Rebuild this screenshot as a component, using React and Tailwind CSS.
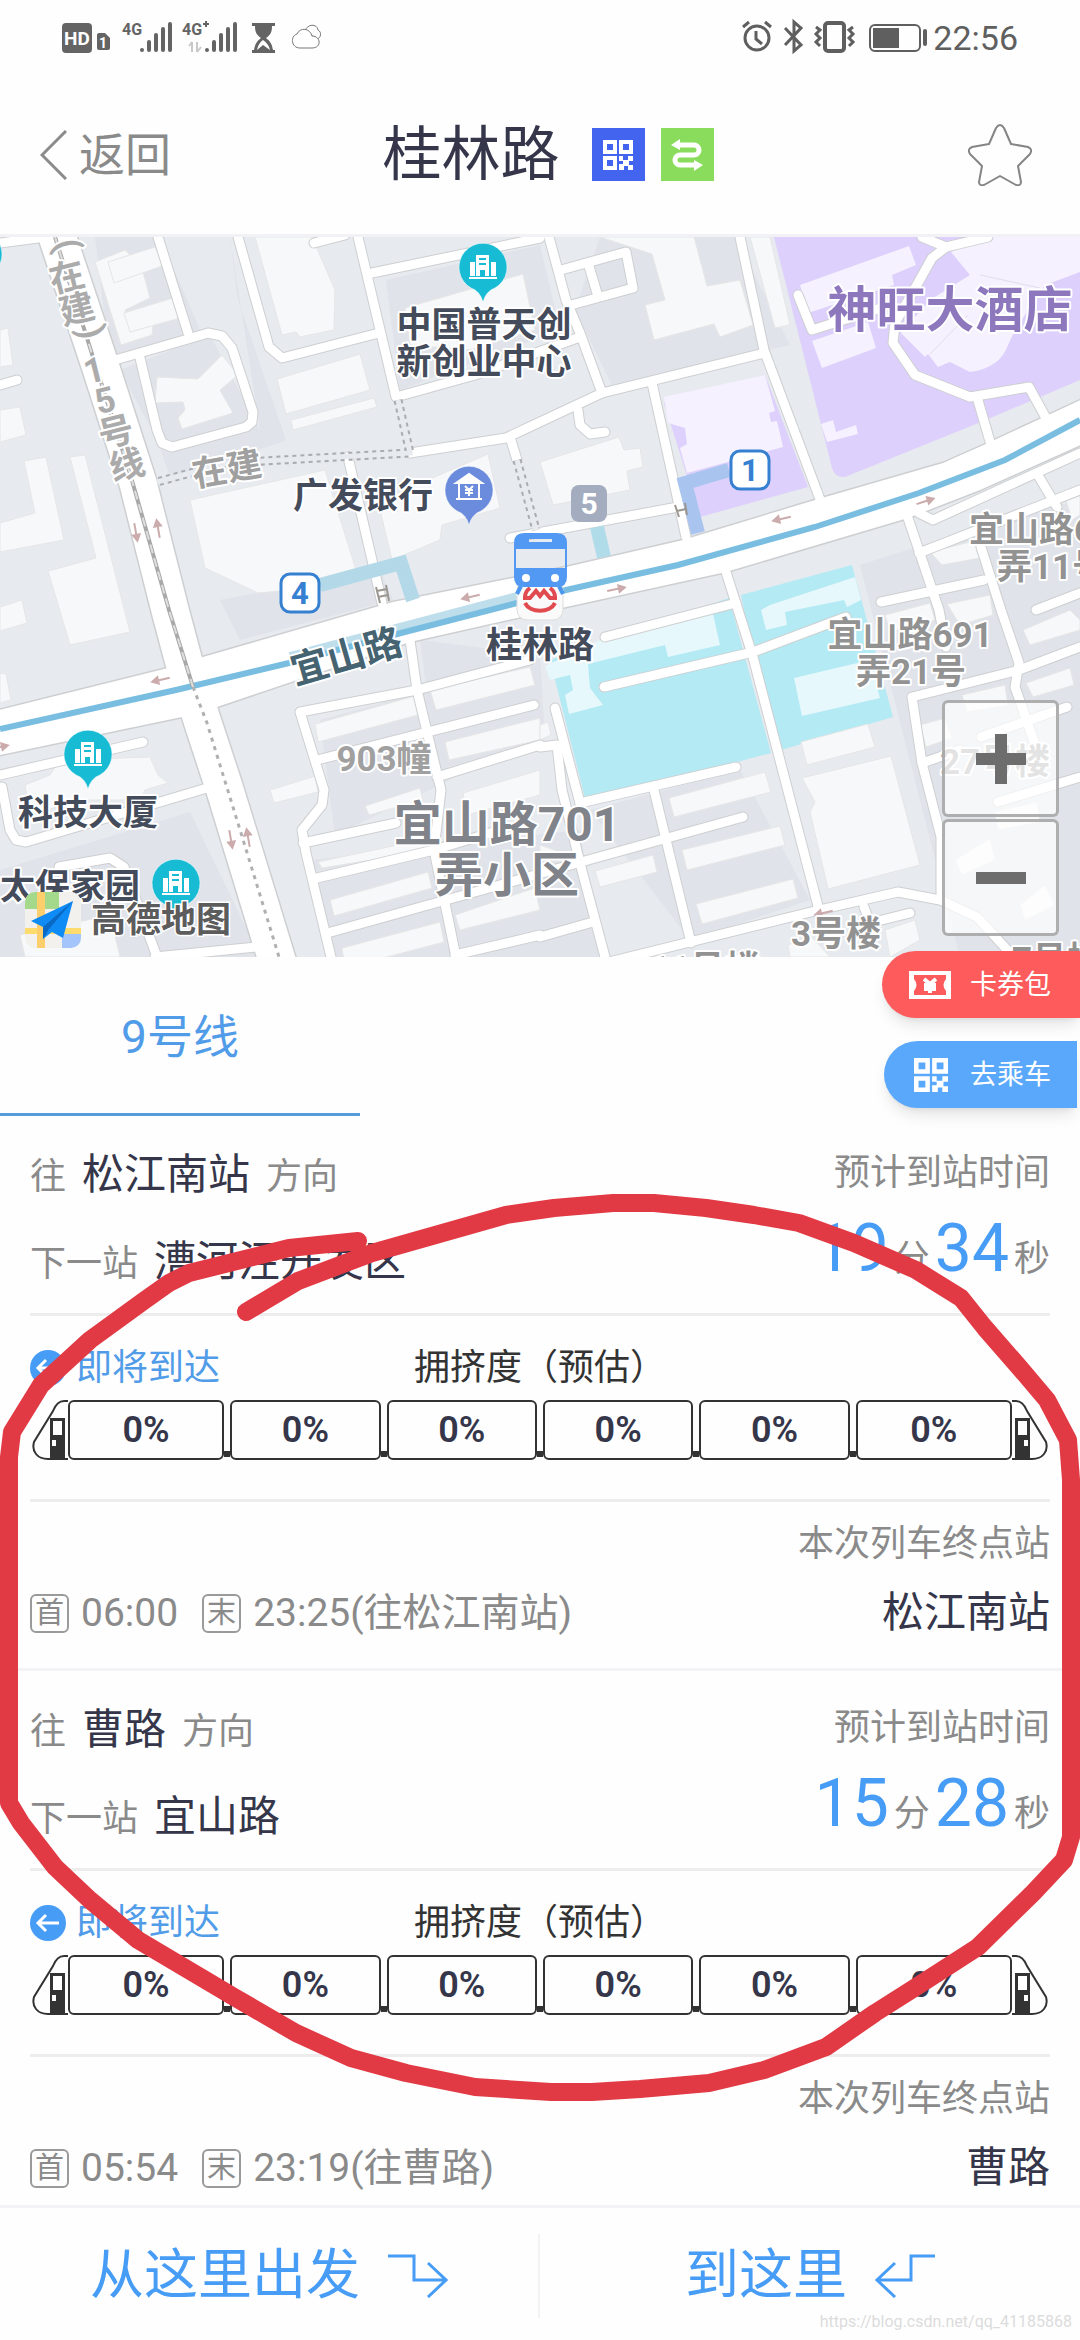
import React from 'react';

const directions = [
  {
    to: '松江南站',
    next: '漕河泾开发区',
    minutes: '19',
    seconds: '34',
    first: '06:00',
    last: '23:25(往松江南站)',
    cars: ['0%', '0%', '0%', '0%', '0%', '0%'],
  },
  {
    to: '曹路',
    next: '宜山路',
    minutes: '15',
    seconds: '28',
    first: '05:54',
    last: '23:19(往曹路)',
    cars: ['0%', '0%', '0%', '0%', '0%', '0%'],
  },
];

const StatusBar = () => (
  <div className="flex h-[75px] items-center justify-between pl-[60px] pr-[62px] text-[#5f5f5f]">
    <svg viewBox="60 18 264 40" className="h-10 w-[264px]" fill="#646464">
      <rect x="62" y="23" width="30" height="30" rx="4" />
      <text x="77" y="45" fontSize="19" fontWeight="700" fill="#fff" textAnchor="middle">HD</text>
      <path d="M97 35q0-2 2-2h6l5 5v10q0 2-2 2h-9q-2 0-2-2z" />
      <text x="103" y="48" fontSize="14" fontWeight="700" fill="#fff" textAnchor="middle">1</text>
      <text x="122" y="35" fontSize="16" fontWeight="700">4G</text>
      <text x="182" y="35" fontSize="16" fontWeight="700">4G</text>
      <path d="M203 24h6M206 21v6" stroke="#646464" strokeWidth="2" />
      <g stroke="#646464" strokeWidth="4" strokeLinecap="round">
        <path d="M142 50v0M149 42v8M156 35v15M163 29v21M170 24v26" />
        <path d="M207 50v0M214 42v8M221 35v15M228 29v21M235 24v26" />
      </g>
      <path d="M192 42v10M189 46l3-4M197 42v10M197 52l4-5" stroke="#c8c8c8" strokeWidth="2" fill="none" />
      <path d="M252 23h23v3h-3c0 7-2 9-6 12c4 3 6 6 7 12h2v3h-23v-3h2c1-6 3-9 7-12c-4-3-6-5-6-12h-3z" />
      <path d="M257 50c1-5 3-8 6-10c3 2 6 5 7 10l-7-5z" fill="#fff" />
      <g fill="#fff" stroke="#777" strokeWidth="1">
        <path d="M305 31c2-7 12-8 13-1c4 2 3 8-1 9z" />
        <path d="M300 48c-9 0-10-12-3-14c3-7 13-6 15 2c9 0 10 12 0 12z" />
      </g>
    </svg>
    <div className="flex items-center gap-1">
      <svg viewBox="738 18 189 40" className="h-10 w-[189px]" fill="none" stroke="#5f5f5f" strokeWidth="3">
        <circle cx="755" cy="38" r="12" />
        <path d="M754 31v8l6 5M741 27l6-5M763 22l6 5" />
        <path d="M783 28l16 17l-7 6v-29l7 6l-16 17" />
        <rect x="823" y="23" width="19" height="28" rx="3" strokeWidth="4" />
        <path d="M814 27l4 3l-4 4l4 4l-4 4l4 4M851 27l-4 3l4 4l-4 4l4 4l-4 4" />
        <rect x="868" y="25" width="50" height="26" rx="5" strokeWidth="2" />
        <path d="M871 28h26v20h-26z" fill="#5f5f5f" stroke="none" />
        <path d="M923 31v13" strokeWidth="4" strokeLinecap="round" />
      </svg>
      <span className="text-[34px] leading-10">22:56</span>
    </div>
  </div>
);

const QrIcon = ({ className }) => (
  <svg viewBox="0 0 30 30" className={className} fill="currentColor">
    <path fillRule="evenodd" d="M0 0h14v14h-14zM4 4v6h6v-6zM16 0h14v14h-14zM20 4v6h6v-6zM0 16h14v14h-14zM4 20v6h6v-6z" />
    <path d="M16 16h4v4h5v-4h5v5h-4v4h4v5h-5v-4h-4v4h-5v-6h4v-3h-4z" />
  </svg>
);

const Header = () => (
  <header className="grid grid-cols-3 items-center border-b-[3px] border-[#f2f2f6] px-10 h-[162px]">
    <button className="flex items-center gap-3 text-[46px] leading-[60px] text-[#8a8a8a]">
      <svg viewBox="0 0 27 50" className="h-[50px] w-[27px]" fill="none" stroke="currentColor" strokeWidth="3">
        <path d="M26 1L2 25L26 49" />
      </svg>
      返回
    </button>
    <div className="flex items-center justify-center gap-4 whitespace-nowrap pl-4">
      <h1 className="mr-4 text-[59px] leading-[70px] text-[#35364a]">桂林路</h1>
      <span className="flex size-[53px] shrink-0 items-center justify-center bg-[#4364ee] text-white">
        <QrIcon className="size-[30px]" />
      </span>
      <span className="flex size-[53px] shrink-0 items-center justify-center bg-[#8adc5c]">
        <svg viewBox="0 0 40 32" className="h-8 w-10" fill="none" stroke="#fff" strokeWidth="5">
          <path d="M12 6h15a5 5 0 0 1 0 10h-14a5 5 0 0 0 0 10h15" />
          <path d="M13 0v11l-9-5zM27 21v11l9-6z" fill="#fff" stroke="none" />
        </svg>
      </span>
    </div>
    <button className="justify-self-end" aria-label="收藏">
      <svg viewBox="0 0 64 62" className="mr-2 h-[62px] w-16" fill="none" stroke="#858585" strokeWidth="2" strokeLinejoin="round">
        <path d="M28 4q4-6 8 0l7 16l17 3q5 2 2 7l-12 12l3 16q0 4-5 3l-16-9l-16 9q-5 1-5-3l3-16l-12-12q-3-5 2-7l17-3z" />
      </svg>
    </button>
  </header>
);

const blocks = [
  '95,237 160,237 200,330 110,360', '230,237 238,300 286,440 172,482 157,440 120,370 210,335 260,430',
  '386,280 540,245 560,330 400,390', '600,237 735,237 790,345 612,385 575,310', '0,870 190,812 260,957 0,957',
  '320,720 430,690 450,780 335,835', '220,600 380,570 393,600 240,640', '860,565 1000,520 1080,500 1080,957 960,957',
  '420,640 540,655 545,740 437,770', '590,810 740,770 810,900 690,940', '310,860 580,830 600,957 335,957',
];

const buildings = [
  '95,262 125,250 130,255 110,262 115,282 142,268 150,298 125,310 130,332 153,325 152,335 121,345',
  '108,262 155,247 165,265 114,283', '124,313 176,297 180,318 130,332',
  '255,237 312,237 335,290 334,330 300,337 296,332 282,335', '157,377 198,379 222,355 238,375 220,390 233,413 182,429 178,418 185,410 183,402 155,403',
  '277,379 360,354 370,390 286,414', '291,420 374,398 377,407 293,430',
  '405,308 523,274 535,330 470,350 410,345', '190,500 325,470 356,570 290,590 258,593 205,568',
  '388,497 488,454 500,508 442,525 440,540 392,560 380,510', '0,330 8,328 13,365 0,367', '0,410 20,407 26,435 0,442',
  '24,461 46,457 64,540 0,552 0,523 35,513', '70,457 85,455 130,632 70,645 48,571 96,558',
  '600,237 650,237 694,237 707,286 740,280 753,325 720,337 714,324 654,340 645,305 665,300 652,254', '750,237 770,237 790,325 775,328',
  '540,462 619,437 624,450 640,448 643,467 627,471 630,490 553,505', '0,607 22,600 27,623 0,631', '0,673 6,674 11,700 0,703',
  '25,785 50,775 60,760 150,757 158,775 168,783 145,790 140,800 80,800 30,815',
  '315,724 415,696 418,715 318,742', '430,690 530,667 535,685 436,710', '445,742 540,718 540,740 449,760',
  '270,790 315,776 318,792 274,803', '365,806 420,788 423,800 369,815', '463,793 540,770 540,795 467,815',
  '318,862 430,838 433,850 322,868', '330,900 428,872 432,888 334,916', '342,948 440,922 444,942 345,968', '455,915 535,888 540,910 460,930',
  '669,798 765,772 771,792 674,817', '682,850 780,826 785,845 687,870', '696,904 793,879 798,898 702,924', '595,871 653,855 657,872 600,887',
  '801,742 868,724 875,747 807,765', '802,778 891,756 900,790 920,865 828,889 810,812 815,802', '540,860 560,852 540,845',
  '947,604 990,595 993,615 960,625', '1023,630 1070,610 1080,620 1080,630 1030,645', '1026,683 1070,668 1074,685 1033,697',
  '885,615 930,603 935,620 890,632', '920,725 945,718 952,738 926,747', '962,695 1005,685 1008,705 967,712', '994,812 1037,802 1040,822 998,830',
  '955,860 990,838 995,860 962,875', '1020,905 1045,885 1055,905 1025,920', '930,552 978,540 980,558 942,565', '1066,500 1080,492 1080,515 1072,520',
  '885,930 915,920 920,940 890,957', '20,935 110,915 120,957 25,957', '540,725 548,722 551,735 540,740', '788,945 810,935 830,957 790,957',
];

const roads = [
  '158,237 188,333', '115,360 188,339 208,333 222,336 232,348 253,412 252,422 246,427 172,447 162,443 157,430 140,358',
  '238,237 269,347 282,358 379,333', '358,237 396,397 475,375 580,337', '314,243 345,235', '372,273 540,238', '0,385 17,380', '0,243 38,238',
  '410,453 506,438 540,422 602,393 764,353', '510,437 517,460', '348,457 382,603', '549,237 566,300 580,333 602,393',
  '561,270 626,252 633,288 571,305', '588,263 597,293', '740,237 764,350 821,502', '652,383 686,537', '510,538 678,507',
  '578,410 580,425 590,434 605,432', '922,237 946,247 988,237', '946,247 932,258 914,290 895,323 893,343 915,375 970,397 1029,387 1046,418',
  '977,397 991,445', '798,295 812,330 884,307', '919,513 933,520 1080,453', '908,518 939,610 946,647', '1039,477 1057,507', '981,547 1001,610 1019,663 1015,687 1036,747',
  '919,553 1080,490', '881,602 984,580', '605,637 736,603', '604,687 753,652 846,617', '726,572 753,657 819,910',
  '580,803 736,767', '555,708 581,807', '540,747 557,745 562,790 581,867 605,957', '654,790 691,943', '581,862 743,817', '540,937 593,922',
  '609,962 819,910 898,892 940,900 977,917 1012,955', '864,907 870,923 910,913', '1080,647 1019,670 912,697 922,763 941,837 941,900',
  '922,763 960,750', '981,737 1067,707', '998,802 1080,777', '1036,610 1080,593', '410,640 417,690 441,790 434,850 456,957',
  '530,660 417,690 300,712 324,790 322,805 302,830 306,853 331,957', '317,760 534,705', '437,777 540,745', '303,843 396,823', '317,878 434,850 500,830',
  '331,932 500,885 581,862', '455,955 540,935', '0,775 143,742', '2,787 10,830 16,840 26,842 207,788', '59,867 110,858 124,867 157,957', '155,957 257,947',
];

const mainRoad = '-5,711 168,668 203,657 393,602 513,578 566,567 683,540 815,500 943,463 988,443 1085,398 1085,443 980,490 908,518 726,572 566,607 410,642 217,707 182,717 -5,756';
const northRoad = '55,230 100,365 138,483 170,610 186,670 201,717 224,787 280,970';

// text, x, y, size, colour, anchor, rotation
const labels = [
  ['中国普天创', 484, 337, 35, '#444b5a', 'middle', 0],
  ['新创业中心', 484, 374, 35, '#444b5a', 'middle', 0],
  ['广发银行', 363, 508, 35, '#444b5a', 'middle', 0],
  ['桂林路', 540, 658, 36, '#444b5a', 'middle', 0],
  ['科技大厦', 88, 825, 35, '#444b5a', 'middle', 0],
  ['太保家园', 70, 899, 35, '#444b5a', 'middle', 0],
  ['宜山路701', 507, 841, 48, '#808389', 'middle', 0],
  ['弄小区', 507, 892, 48, '#808389', 'middle', 0],
  ['宜山路691', 910, 647, 35, '#929292', 'middle', 0],
  ['弄21号', 911, 684, 35, '#929292', 'middle', 0],
  ['宜山路6', 969, 542, 35, '#929292', 'start', 0],
  ['弄11号', 997, 579, 35, '#929292', 'start', 0],
  ['903幢', 384, 771, 35, '#a0a0a0', 'middle', 0],
  ['在建', 229, 481, 35, '#a0a0a0', 'middle', -10],
  ['宜山路', 350, 669, 38, '#456370', 'middle', -16],
  ['3号楼', 836, 946, 35, '#929292', 'middle', 0],
  ['27号楼', 995, 774, 35, '#a0a0a0', 'middle', 0],
  ['11号楼', 705, 981, 35, '#929292', 'middle', 0],
  ['7号楼', 1012, 972, 35, '#929292', 'start', 0],
  ['神旺大酒店', 950, 327, 49, '#8e78bd', 'middle', 0],
  ['(', 56, 248, 36, '#ababab', 'middle', 76],
  ['在', 70, 289, 35, '#ababab', 'middle', -14],
  ['建', 80, 321, 35, '#ababab', 'middle', -14],
  [')', 80, 335, 36, '#ababab', 'middle', 76],
  ['1', 97, 382, 35, '#ababab', 'middle', -14],
  ['5', 108, 412, 35, '#ababab', 'middle', -14],
  ['号', 119, 444, 35, '#ababab', 'middle', -14],
  ['线', 130, 477, 35, '#ababab', 'middle', -14],
];

const arrows = [[136, 533, 80], [158, 528, -100], [470, 597, 167], [781, 519, 167], [926, 501, -18], [617, 589, -12], [160, 680, 167], [231, 840, 80], [248, 837, -100], [823, 913, 167], [0, 747, -12]];

const Pin = ({ x, y, color, bank }) => (
  <g transform={`translate(${x} ${y})`}>
    <path d="M0 36q-3-11-12-14a24 24 0 1 1 24 0q-9 3-12 14z" fill={color} stroke="#fff" strokeOpacity="0.5" />
    {bank ? (
      <g fill="none" stroke="#fff" strokeWidth="2">
        <path d="M-13-6l13-9l13 9z" fill="#fff" />
        <path d="M-10-6v16M10-6v16M-13 10h26M-4-3l4 4l4-4M0 1v6M-4 1h8M-4 4h8" />
      </g>
    ) : (
      <g fill="#fff">
        <path d="M-14 11h28v2h-28zM-13-4h5v14h-5zM8-4h5v14h-5z" />
        <path fillRule="evenodd" d="M-7-11h13v21h-4v-6h-5v6h-4zM-4-8v2h7v-2zM-4-3v2h7v-2z" />
      </g>
    )}
  </g>
);

const ExitBadge = ({ x, y, n }) => (
  <g>
    <rect x={x - 19} y={y - 19} width="38" height="38" rx="9" fill="#fff" stroke="#3680d2" strokeWidth="3" />
    <text x={x} y={y + 11} fontSize="31" fontWeight="700" fill="#3680d2" textAnchor="middle">{n}</text>
  </g>
);

const StationMap = () => (
  <div className="relative">
    <svg viewBox="0 237 1080 720" className="block w-full">
      <rect y="237" width="1080" height="720" fill="#e7eaef" />
      <g fill="#e0e3e9">
        {blocks.map((p) => <polygon key={p} points={p} />)}
      </g>
      <g fill="#ded0fc">
        <path d="M774 237H1080V380L981 422L845 477Q835 478 832 468z" />
        <path d="M664 403L765 375L808 487L700 517z" />
      </g>
      <g fill="#b3eaf4">
        <path d="M550 660L729 598L771 753L586 802z" />
        <path d="M741 595L852 565L893 717L781 750L753 657z" />
      </g>
      <g fill="#f7f8fa" stroke="#e6e6e6">
        {buildings.map((p) => <polygon key={p} points={p} />)}
      </g>
      <g fill="#f5f1fe">
        <path d="M664 397L765 375L775 411L769 413L771 422L777 421L783 447L687 473L680 448L687 444L685 428L668 423z" />
        <path d="M800 285L909 246L916 265L892 275L894 285L808 313z" />
        <path d="M812 341L868 322L876 348L822 368z" />
        <path d="M951 252L985 237L1080 237V272L1045 285L1015 330L1008 345Q1000 368 970 372L950 362L938 367L928 354L925 357L901 333L930 300L970 275z" />
        <path d="M821 424L833 420L836 432L856 425L858 434L827 442z" />
      </g>
      <path d="M930 354L968 315M980 275L1040 288" stroke="#e2dced" fill="none" />
      <g fill="#e6f8fb">
        <path d="M545 666L600 640L713 614L720 645L668 657L665 645L588 664L590 688L603 705L569 714L565 695L573 690L570 675L550 680z" />
        <path d="M770 605L855 577L861 600L847 607L844 600L785 612L787 625L766 630L761 610z" />
        <path d="M794 678L870 660L880 698L802 716z" />
      </g>
      <g fill="none" strokeLinejoin="round" strokeLinecap="round">
        <g stroke="#cdcfd1" strokeWidth="11">
          {roads.map((p) => <polyline key={p} points={p} />)}
        </g>
        <polyline points={northRoad} stroke="#cdcfd1" strokeWidth="40" />
        <polygon points={mainRoad} stroke="#cdcfd1" strokeWidth="3" />
        <g stroke="#fff" strokeWidth="9">
          {roads.map((p) => <polyline key={p} points={p} />)}
        </g>
        <polyline points={northRoad} stroke="#fff" strokeWidth="37" />
        <polygon points={mainRoad} fill="#fff" />
      </g>
      <g fill="none">
        <g stroke="#a9acb0" strokeWidth="9" strokeDasharray="4 4">
          <path d="M398 400L410 453L227 463L157 482M517 460L536 530" />
        </g>
        <path d="M398 400L410 453L227 463L157 482M517 460L536 530" stroke="#e7eaef" strokeWidth="5" />
        <path d="M320 585L401 563L413 600" stroke="#b3d9e9" strokeWidth="14" />
        <path d="M729 470L685 483L698 533" stroke="#a9c5ef" strokeWidth="14" />
        <path d="M597 527L604 557" stroke="#b0dcea" strokeWidth="14" />
        <path d="M290 657L517 597" stroke="#bfdeeb" strokeWidth="10" />
        <path d="M0 729L176 690L289 663L401 633L517 603L566 590L678 565L815 527L919 493L1005 460L1080 420" stroke="#79bee1" strokeWidth="6" />
        <path d="M55 237L131 477L169 610L193 687" stroke="#a8a8a8" strokeWidth="4" />
        <path d="M55 237L131 477L169 610L193 687" stroke="#dedede" strokeWidth="2" strokeDasharray="9 5" />
        <path d="M193 687L207 723L241 833L279 957" stroke="#b0b0b0" strokeWidth="3" strokeDasharray="4 5" />
        <path d="M376 587l4 16M386 585l3 16M377 591l10-2M378 597l10-2M675 505l4 12M685 503l2 12M677 511l9-2" stroke="#9c9690" strokeWidth="2" />
      </g>
      {arrows.map(([x, y, r]) => (
        <path key={`${x}-${y}`} transform={`translate(${x} ${y}) rotate(${r})`} d="M-10-1H1V-5L10 0L1 5V1H-10z" fill="#cbabab" />
      ))}
      {labels.map(([text, x, y, size, color, anchor, rotate]) => (
        <text
          key={`${text}-${y}`}
          x={x}
          y={y}
          fontSize={size}
          fontWeight="700"
          fill={color}
          textAnchor={anchor}
          stroke="#fff"
          strokeWidth="4"
          strokeLinejoin="round"
          paintOrder="stroke"
          transform={`rotate(${rotate} ${x} ${y})`}
        >
          {text}
        </text>
      ))}
      <Pin x={483} y={266} color="#17bbd3" />
      <Pin x={88} y={753} color="#17bbd3" />
      <Pin x={176} y={882} color="#17bbd3" />
      <Pin x={-22} y={253} color="#17bbd3" />
      <Pin x={469} y={489} color="#6b8bdc" bank />
      <ExitBadge x={300} y={593} n="4" />
      <ExitBadge x={750} y={470} n="1" />
      <rect x="571" y="485" width="36" height="37" rx="8" fill="#a4adbf" />
      <text x="589" y="514" fontSize="30" fontWeight="700" fill="#fff" textAnchor="middle">5</text>

      {/* metro marker */}
      <rect x="517" y="580" width="46" height="40" rx="10" fill="#fafafa" stroke="#ddd" />
      <g fill="none" stroke="#e14a4e" strokeWidth="4">
        <path d="M530 588a14 12 0 0 0-5 9M550 588a14 12 0 0 1 5 9" />
        <path d="M523 598h7l6-7l4 5l4-5l6 7h7M525 603a16 12 0 0 0 30 0" />
      </g>
      <path d="M521 586l-4 8M559 586l4 8" stroke="#4b97ee" strokeWidth="4" />
      <path fillRule="evenodd" d="M524 533h33q10 0 10 10v34q0 10-10 10h-33q-10 0-10-10v-34q0-10 10-10zM516 549v19h49v-19zM529 539v3h23v-3z" fill="#5199f2" />
      <circle cx="526" cy="578" r="4" fill="#fff" />
      <circle cx="555" cy="578" r="4" fill="#fff" />

      {/* provider mark */}
      <clipPath id="mark"><rect x="25" y="892" width="56" height="56" rx="10" /></clipPath>
      <g clipPath="url(#mark)">
        <path d="M25 892h56v56h-56z" fill="#f2f1ed" />
        <path d="M25 892h34v17h-34z" fill="#a4d98b" />
        <path d="M62 930h20v20h-20z" fill="#a4c5fb" />
        <path d="M25 928h56v6h-56z" fill="#fddb6c" />
        <path d="M37 892h8v56h-8z" fill="#fdce6c" />
        <path d="M73 901L31 921l12 6v12l9-7l11 6z" fill="#0f8bf5" />
        <path d="M73 901L43 927v12l6-10z" fill="#0a69c4" />
      </g>
      <text x="91" y="932" fontSize="35" fontWeight="700" fill="#5c5c5c" stroke="#fff" strokeWidth="3" paintOrder="stroke">高德地图</text>
    </svg>
    <div className="absolute bottom-[21px] right-[21px] flex flex-col gap-[2px]">
      {['放大', '缩小'].map((name) => (
        <button key={name} aria-label={name} className="flex h-[117px] w-[117px] items-center justify-center rounded-md border-[3px] border-[#9b9b9b]/80 bg-white/70">
          <svg viewBox="0 0 50 50" className="size-[50px]" fill="#6d6d6d">
            <path d="M0 19h50v12h-50z" />
            {name === '放大' && <path d="M19 0h12v50h-12z" />}
          </svg>
        </button>
      ))}
    </div>
  </div>
);

const FloatingActions = () => (
  <div className="absolute right-0 -top-[6px] flex flex-col items-end gap-[23px] text-[27px] leading-10 text-white">
    <button className="flex h-[67px] w-[198px] items-center gap-[19px] rounded-l-full bg-[#fd5b5c] pl-[27px] shadow-lg">
      <svg viewBox="0 0 42 28" className="h-7 w-[42px]">
        <path fillRule="evenodd" fill="#fff" d="M0 0h42v28h-42zM5 4v4q5 6 0 12v4h32v-4q-5-6 0-12v-4z" />
        <path d="M15 8l6 5l6-5M21 13v9M15 14h12M15 18h12" stroke="#fff" strokeWidth="4" fill="none" />
      </svg>
      卡券包
    </button>
    <button className="mr-[3px] flex h-[67px] w-[193px] items-center gap-[22px] rounded-l-full bg-[#5aa8fb] pl-[30px] shadow-lg">
      <QrIcon className="size-[34px]" />
      去乘车
    </button>
  </div>
);

const Cab = ({ flip }) => (
  <svg viewBox="0 0 36 60" className={flip ? 'h-[60px] w-9 shrink-0 -scale-x-100' : 'h-[60px] w-9 shrink-0'} fill="none" stroke="#333">
    <path d="M36 1h-4q-7 0-11 10L2 42q-2 7 2 12q4 5 12 5h20" strokeWidth="2" />
    <path d="M18 18h15v42h-15z" fill="#333" stroke="none" />
    <path d="M21 21h9v14h-9zM20 40h4v6h-4z" fill="#fff" stroke="none" />
  </svg>
);

// the two end cars are slightly longer than the middle ones
const Train = ({ cars }) => (
  <div className="flex items-stretch px-[2px]">
    <Cab />
    {cars.map((load, i) => (
      <React.Fragment key={i}>
        {i > 0 && <span className="mb-[3px] h-[6px] w-[6px] shrink-0 self-end bg-[#333]" />}
        <span
          className={`flex h-[60px] items-center justify-center rounded-md border-2 border-[#333] text-[36px] font-semibold leading-10 text-[#35364a] ${
            i === 0 || i === cars.length - 1 ? 'flex-[156]' : 'flex-[150]'
          }`}
        >
          {load}
        </span>
      </React.Fragment>
    ))}
    <Cab flip />
  </div>
);

const TimeBadge = ({ children }) => (
  <span className="flex size-[39px] items-center justify-center rounded-md border-2 border-[#9a9a9a] text-[29px] leading-8">{children}</span>
);

const DirectionCard = ({ item }) => (
  <section className="border-b-[3px] border-[#f3f3f6] px-[30px] pb-[25px] text-[36px] text-[#8a8a8a] last:border-b-0 last:pb-[7px]">
    <div className="flex justify-between border-b-[3px] border-[#ededed] pb-5 pt-[30px]">
      <div className="flex flex-col gap-[27px]">
        <div className="flex items-baseline gap-4 leading-[58px]">
          往 <b className="text-[42px] font-normal text-[#35364a]">{item.to}</b> 方向
        </div>
        <div className="flex items-baseline gap-4 leading-[58px]">
          下一站 <b className="text-[42px] font-normal text-[#35364a]">{item.next}</b>
        </div>
      </div>
      <div className="flex flex-col items-end gap-4">
        <div className="leading-[54px]">预计到站时间</div>
        <div className="flex items-baseline gap-[5px] leading-[66px]">
          <b className="text-[66px] font-normal text-[#479cf6]">{item.minutes}</b>分
          <b className="text-[66px] font-normal text-[#479cf6]">{item.seconds}</b>秒
        </div>
      </div>
    </div>
    <div className="border-b-[3px] border-[#ededed] pb-[39px] pt-6">
      <div className="grid grid-cols-3 items-center pb-1 leading-[56px]">
        <div className="flex items-center gap-[10px] text-[#519ce8]">
          <svg viewBox="0 0 36 36" className="size-9" fill="none" stroke="#fff" strokeWidth="3">
            <circle cx="18" cy="18" r="18" fill="#479cf6" stroke="none" />
            <path d="M29 18H8M16 10l-8 8l8 8" />
          </svg>
          即将到达
        </div>
        <div className="text-center text-[#333]">拥挤度（预估）</div>
      </div>
      <Train cars={item.cars} />
    </div>
    <div className="pt-[17px] text-right leading-[50px]">本次列车终点站</div>
    <div className="mt-[14px] flex items-center justify-between leading-[60px]">
      <div className="flex items-center gap-3 text-[39px]">
        <TimeBadge>首</TimeBadge>
        {item.first}
        <span />
        <TimeBadge>末</TimeBadge>
        {item.last}
      </div>
      <b className="text-[42px] font-normal text-[#35364a]">{item.to}</b>
    </div>
  </section>
);

const BottomBar = () => (
  <footer className="relative border-t-[3px] border-[#f3f3f6] pb-[22px] pt-[26px]">
    <div className="grid grid-cols-2 divide-x-2 divide-[#f3f3f6] text-[54px] leading-[84px] text-[#479cf6]">
      <button className="flex items-center justify-center gap-7">
        从这里出发
        <svg viewBox="0 0 60 44" className="h-11 w-[60px]" fill="none" stroke="currentColor" strokeWidth="3">
          <path d="M0 2h26v24h32M40 9l18 17l-18 17" />
        </svg>
      </button>
      <button className="flex items-center justify-center gap-7">
        到这里
        <svg viewBox="0 0 60 44" className="h-11 w-[60px]" fill="none" stroke="currentColor" strokeWidth="3">
          <path d="M60 2h-24v24h-34M20 9l-18 17l18 17" />
        </svg>
      </button>
    </div>
    <span className="absolute bottom-2 right-2 text-[16px] leading-5 text-[#dcdcdc]">https://blog.csdn.net/qq_41185868</span>
  </footer>
);

const Annotation = () => (
  <svg viewBox="0 0 1080 2340" className="pointer-events-none absolute left-0 top-0 w-full" fill="none" stroke="#e23a44" strokeWidth="18" strokeLinecap="round" strokeLinejoin="round">
    <path d="M246 1312L298 1281L372 1253L506 1215L554 1208L613 1203L654 1203L706 1208L754 1215L799 1223L854 1243L916 1270L961 1298L985 1328L1019 1367L1047 1400L1068 1440L1071 1480V1837L1064 1860L1033 1893L978 1947L916 1987L875 2013L826 2047L764 2070L709 2083L640 2089L592 2092H551L475 2087L406 2073L351 2058L296 2033L234 1997L138 1940L90 1900L55 1867L21 1823L9 1803V1457L12 1432L41 1385L90 1340L145 1300L169 1283L189 1273L289 1248L358 1241" />
  </svg>
);

const App = () => {
  return (
    <div className="relative min-h-screen overflow-hidden bg-[#fefefe] font-['Roboto','Noto_Sans_CJK_SC',sans-serif]">
      <StatusBar />
      <Header />
      <StationMap />
      <main className="relative">
        <FloatingActions />
        <nav className="flex">
          <button className="w-1/3 border-b-[3px] border-[#579bdd] pb-[46px] pt-[50px] text-[46px] leading-[60px] text-[#519ce8]">9号线</button>
        </nav>
        {directions.map((item) => <DirectionCard key={item.to} item={item} />)}
      </main>
      <BottomBar />
      <Annotation />
    </div>
  );
};

export default App;
